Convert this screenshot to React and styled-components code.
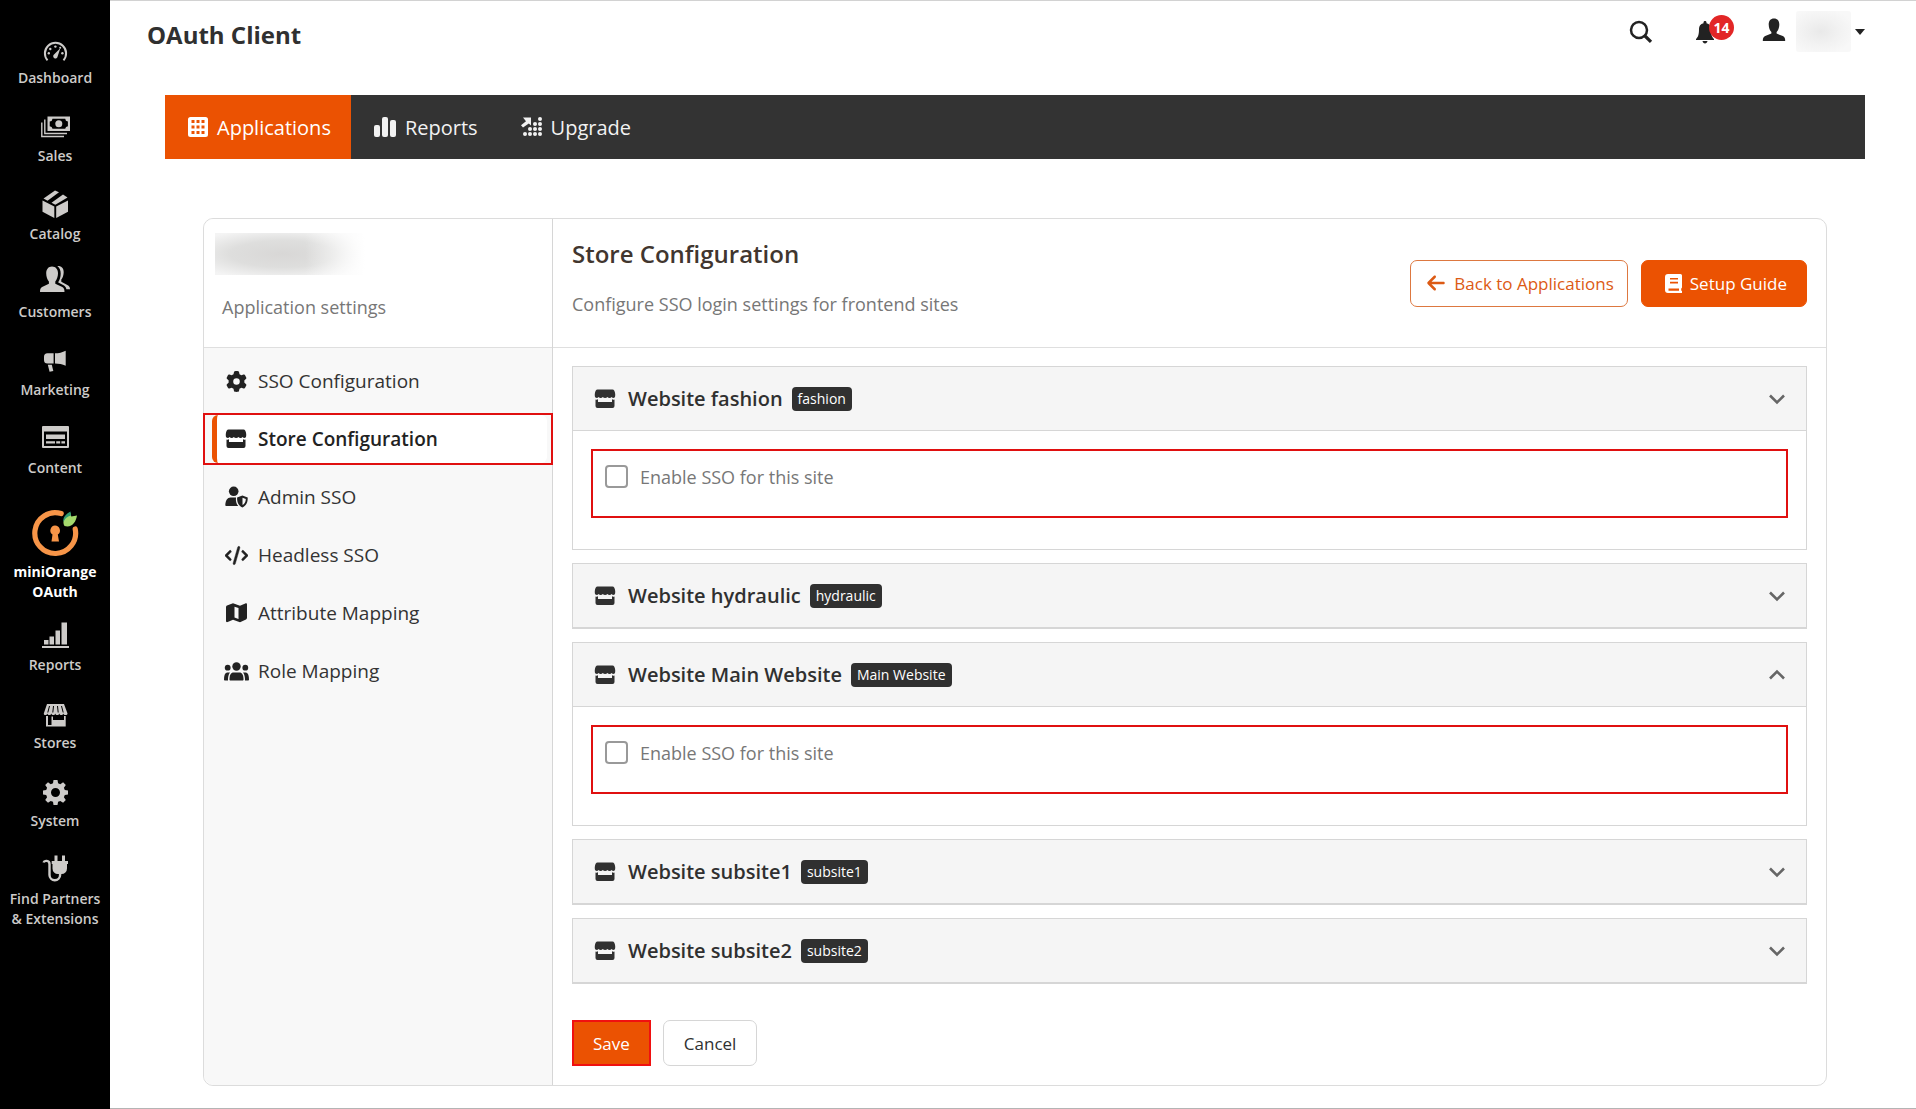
import { useState } from 'react';
import styled, { createGlobalStyle } from 'styled-components';
import { FaArrowLeft, FaCode, FaGear } from 'react-icons/fa6';

const MENU = [
  { label: 'Dashboard', icon: 'dashboard' },
  { label: 'Sales', icon: 'sales' },
  { label: 'Catalog', icon: 'catalog' },
  { label: 'Customers', icon: 'customers' },
  { label: 'Marketing', icon: 'marketing' },
  { label: 'Content', icon: 'content' },
  { label: 'miniOrange OAuth', icon: 'logo', active: true },
  { label: 'Reports', icon: 'reports' },
  { label: 'Stores', icon: 'stores' },
  { label: 'System', icon: 'system' },
  { label: 'Find Partners & Extensions', icon: 'plug' },
];

const SETTINGS = [
  { label: 'SSO Configuration', icon: <FaGear size={21} /> },
  { label: 'Store Configuration', icon: <StoreIcon />, active: true },
  { label: 'Admin SSO', icon: <AdminIcon /> },
  { label: 'Headless SSO', icon: <FaCode size={23} stroke="currentColor" strokeWidth="12" /> },
  { label: 'Attribute Mapping', icon: <MapIcon /> },
  { label: 'Role Mapping', icon: <RolesIcon /> },
];

const SITES = [
  { name: 'fashion', open: true, arrowUp: false },
  { name: 'hydraulic', open: false, arrowUp: false },
  { name: 'Main Website', open: true, arrowUp: true },
  { name: 'subsite1', open: false, arrowUp: false },
  { name: 'subsite2', open: false, arrowUp: false },
];

const MENU_ICONS = {
  dashboard: (
    <>
      <path d="M8.5 28.3A10.6 10.6 0 1 1 24.5 28.3" fill="none" stroke="currentColor" strokeWidth="2" />
      <path d="M21.3 16.2L18.6 24.4A2.2 2.2 0 1 1 15 22.5Z" />
      <circle cx="9.8" cy="21.3" r="1.2" />
      <circle cx="11.3" cy="17" r="1.2" />
      <circle cx="16.4" cy="14.6" r="1.2" />
      <circle cx="23.4" cy="21.3" r="1.2" />
      <circle cx="21.2" cy="15.8" r="1" />
    </>
  ),
  sales: (
    <>
      <path
        fillRule="evenodd"
        d="M8.5 6.5h22.5v14.5H8.5zM13.5 8.8a3 3 0 0 1-2.8 2.8v4.6a3 3 0 0 1 2.8 2.6h12.7a3 3 0 0 1 2.7-2.6v-4.6a3 3 0 0 1-2.7-2.8z"
      />
      <circle cx="19.8" cy="13.8" r="3.5" />
      <path d="M5.8 9.5v14H28M2.8 12.5v14H25" fill="none" stroke="currentColor" strokeWidth="1.4" />
    </>
  ),
  catalog: (
    <>
      <path d="M3.5 12.6L15.3 18.6V30L3.5 23.8z" />
      <path d="M29 12.6L17.2 18.6V30L29 23.8z" />
      <path d="M4.5 10.6L16 2.5l4 1.8L8.5 12.7z" />
      <path d="M12.5 14.7L24 6.6l4.5 2.9-12.2 7.3z" />
    </>
  ),
  customers: (
    <>
      <path d="M13 .5c3.700 0 6 2.800 6 6.800 0 3.500-1.300 6.700-2.700 8.200v2.200l7 3.200c1.500.7 2.200 2 2.200 5.100H1c0-3.100.6-4.400 2.100-5.100l6.800-3.200v-2.200C8.400 14 7.200 10.800 7.200 7.300 7.200 3.300 9.300.5 13 .5z" />
      <path d="M18.300 0c4-.5 6.400 2 6.400 6 0 3.200-1.100 6.100-2.400 7.500v2.200l6 3.300c1.900 1 2.700 2 2.700 4.200h-3.600c-.4-2.100-1.500-3.300-3.300-4.200l-4.800-2.500v-.5c1.500-2.200 2.400-5.200 2.400-8.500 0-3-1.100-5.800-3.400-7.500z" />
    </>
  ),
  marketing: (
    <>
      <path d="M14.600 9.300v10.200H8.500A3.500 3.500 0 0 1 5 16v-3.200a3.500 3.500 0 0 1 3.500-3.500z" />
      <path d="M16 9.300c3.800-.1 7.400-.9 10.700-2.600v15c-3.300-1.500-6.900-2.200-10.700-2.200z" />
      <path d="M8.800 20.800h4l1.500 6.200-3.700.7z" />
    </>
  ),
  content: (
    <path
      fillRule="evenodd"
      d="M4 4h25a1 1 0 0 1 1 1v20a1 1 0 0 1-1 1H4a1 1 0 0 1-1-1V5a1 1 0 0 1 1-1zM5 9.500v14.500h23V9.500zM7 12.500h19v4.500H7zM7 19.200h9v2.200H7zM17.200 19.200h4v2.200h-4zM22.400 19.200h3.600v2.200h-3.600z"
    />
  ),
  reports: (
    <path d="M3 27h27v2H3zM5 21h4.500v4.500H5zM10.500 17.500H15v8h-4.500zM16.500 11.500H21v14h-4.500zM22.500 3.500H28v22h-5.500z" />
  ),
  stores: (
    <>
      <path d="M8 7h17l3.500 9.500c0 2-3.800 2-4.200 0-.5 2-3.600 2-4 0-.5 2-3.700 2-4 0-.4 2-3.500 2-4 0-.4 2-3.500 2-4 0-.4 2-3.600 2-3.500 0z" />
      <path d="M10.500 9l-1.700 6.500M14.500 9l-.7 6.500M18.500 9l.7 6.500M22.500 9l1.700 6.500" stroke="#000" strokeWidth="1" />
      <path fillRule="evenodd" d="M7 19h2v9h3.500v-8.500h1.500v3.500h11v-4h1.700v10.500H7z" />
    </>
  ),
  system: (
    <path
      fillRule="evenodd"
      d="M14.500 5h4l.6 3.300 2.200.9 2.800-1.900 2.700 2.700-1.900 2.800.9 2.200 3.200.5v4l-3.200.6-.9 2.200 1.900 2.700-2.700 2.800-2.800-1.900-2.200.9-.6 3.200h-4l-.5-3.200-2.300-.9-2.700 1.900-2.800-2.800 1.900-2.700-.9-2.200-3.200-.6v-4l3.200-.5.9-2.200L6.200 10l2.800-2.700 2.700 1.900 2.300-.9zM16.500 13a4.500 4.500 0 1 0 0 9 4.500 4.500 0 0 0 0-9z"
    />
  ),
  plug: (
    <>
      <path d="M15.500 2.500h3v5.500h4.500V2.500h3V8H29v3h-1v4.500a5.500 5.500 0 0 1-5.500 5.500h-3.500A5.500 5.500 0 0 1 13.500 15.500V11h-.8V8h2.800z" />
      <path
        d="M4.500 9.500c.7-2.300 6-2.500 6 1.500v11a5.300 5.300 0 0 0 10.600 0v-2"
        fill="none"
        stroke="currentColor"
        strokeWidth="2.400"
      />
    </>
  ),
};

function MenuIcon({ name }) {
  if (name === 'logo') {
    return (
      <svg width="60" height="58" viewBox="0 0 60 58" aria-hidden="true">
        <path
          d="M36.200 13.600A20.400 20.400 0 1 0 50.200 29"
          fill="none"
          stroke="#f79548"
          strokeWidth="5.200"
          strokeLinecap="round"
        />
        <path d="M30 25.500a5 5 0 0 1 2.800 9.100l1.200 6.900h-7.500l1-6.900A5 5 0 0 1 30 25.500z" fill="#f79548" />
        <path d="M39.500 26c-3-5 1-9.500 6-13l.8 3.500 5.700-1c-1 6.500-5 12.500-12.500 10.500z" fill="#a4d96c" />
        <path d="M38.500 22c-1-4.500 2.500-8 7-10.500l.5 4c-3 .5-6 2.500-7.500 6.500z" fill="#2c9a72" />
      </svg>
    );
  }
  return (
    <svg width="32" height="32" viewBox="0 0 32 32" fill="currentColor" aria-hidden="true">
      {MENU_ICONS[name]}
    </svg>
  );
}

function StoreIcon() {
  return (
    <svg width="22" height="20" viewBox="0 0 22 20" fill="currentColor" aria-hidden="true">
      <path d="M3.500.5h15c1.500 0 2.500 1.800 2.700 4.500.1 1.800 0 3.300-1 3.800-1 .4-2-.1-2.600-.9-.8 1.300-3.200 1.300-4.200 0-1 1.300-3.600 1.300-4.600 0-1 1.300-3.200 1.300-4.200 0-.6.800-1.700 1.300-2.700.9C.8 8.300.7 6.800.8 5 1 2.300 2 .5 3.500.5z" />
      <path d="M1.500 10.500c1 .3 1.700.2 2.500-.2v2.700h14v-2.700c.8.4 1.500.5 2.500.2V17a2 2 0 0 1-2 2h-15a2 2 0 0 1-2-2z" />
    </svg>
  );
}

function AdminIcon() {
  return (
    <svg width="23" height="22" viewBox="0 0 23 22" fill="currentColor" aria-hidden="true">
      <circle cx="8.700" cy="5.300" r="4.800" />
      <path d="M5.500 11.500h5.500c-.4 3.500.3 6.300 2.200 8.500H1.500C.7 20 .2 19.500.3 18.700.7 14.500 2.300 11.500 5.500 11.500z" />
      <path
        fillRule="evenodd"
        d="M17.400 9.500l5.300 2c.2 4.500-1.300 8.300-5.300 10-4-1.700-5.500-5.500-5.300-10zM17.500 11.800v7.300c2.300-1.200 3.200-3.200 3.300-6z"
      />
    </svg>
  );
}

function MapIcon() {
  return (
    <svg width="21" height="20" viewBox="0 0 21 20" fill="currentColor" aria-hidden="true">
      <path
        fillRule="evenodd"
        d="M0 4.200c0-.8.400-1.300 1-1.600L7 .3l7 2.400L19.300.5C20.300.1 21 .6 21 1.500v13.300c0 .8-.4 1.300-1 1.600L14 19.200l-7-2.500-5.300 2.400c-1 .4-1.700-.1-1.700-1zM8.500 3.700v10.800l4 1.500V5.100z"
      />
    </svg>
  );
}

function RolesIcon() {
  return (
    <svg width="25" height="19" viewBox="0 0 25 19" fill="currentColor" aria-hidden="true">
      <circle cx="12.500" cy="4.500" r="4.200" />
      <circle cx="3.700" cy="5.700" r="2.900" />
      <circle cx="21.300" cy="5.700" r="2.900" />
      <path d="M9.500 10.500h6c2.500 0 4 2.500 4 7 0 .6-.4 1-1 1h-12c-.6 0-1-.4-1-1 0-4.500 1.500-7 4-7z" />
      <path d="M3 10.500h3c-1.500 2-2.100 4.500-2 8H.8c-.5 0-.8-.3-.8-.8 0-4 .8-6.700 3-7.200zM22 10.500h-3c1.500 2 2.100 4.500 2 8h3.200c.5 0 .8-.3.8-.8 0-4-.8-6.700-3-7.200z" />
    </svg>
  );
}

function AppShell() {
  const [sites, setSites] = useState(SITES);

  const toggleSite = name => {
    setSites(
      sites.map(site => (site.name === name ? { ...site, open: !site.open, arrowUp: !site.open } : site)),
    );
  };

  return (
    <Page>
      <Sidebar>
        <MenuList>
          {MENU.map(item => (
            <li key={item.label}>
              <MenuLink href="#" $active={item.active}>
                <MenuIcon name={item.icon} />
                <span>{item.label}</span>
              </MenuLink>
            </li>
          ))}
        </MenuList>
      </Sidebar>

      <Main>
        <Header>
          <PageTitle>OAuth Client</PageTitle>
          <HeaderTools>
            <IconButton aria-label="Search">
              <svg width="24" height="24" viewBox="0 0 24 24" fill="none" stroke="currentColor">
                <circle cx="10" cy="10" r="8" strokeWidth="2.500" />
                <path d="M15.500 15.500l6.500 6.300" strokeWidth="3.200" />
              </svg>
            </IconButton>
            <IconButton aria-label="Notifications">
              <svg width="20" height="24" viewBox="0 0 20 24" fill="currentColor">
                <path d="M10 1c1 0 1.500.6 1.500 1.500v.8C14.600 4 16 6 16 9c0 5.500.8 8 3 10v1H1v-1c2.200-2 3-4.500 3-10 0-3 1.400-5 4.500-5.700v-.8C8.500 1.600 9 1 10 1zM7.500 21h5c-.3 1.600-1.200 2.400-2.500 2.400S7.800 22.600 7.500 21z" />
              </svg>
              <Count>14</Count>
            </IconButton>
            <UserButton aria-label="Account">
              <svg width="24" height="27" viewBox="0 0 24 27" fill="currentColor">
                <path d="M12 .5c3.500 0 5.300 2.300 5.300 6 0 3.200-1.200 6-2.700 7.500v1.600l6.200 2.400c1.700.7 2.400 2 2.400 5H.8c0-3 .7-4.300 2.400-5l6.200-2.400V14C7.900 12.500 6.700 9.700 6.700 6.500c0-3.700 1.800-6 5.300-6z" />
              </svg>
              <HiddenName />
              <svg width="10" height="6" viewBox="0 0 10 6" fill="currentColor">
                <path d="M0 0h10L5 6z" />
              </svg>
            </UserButton>
          </HeaderTools>
        </Header>

        <Tabs>
          <Tab href="#" $active>
            <svg width="20" height="20" viewBox="0 0 20 20" fill="currentColor">
              <path
                fillRule="evenodd"
                d="M2.500 0h15A2.500 2.500 0 0 1 20 2.500v15a2.500 2.500 0 0 1-2.500 2.500h-15A2.500 2.500 0 0 1 0 17.500v-15A2.500 2.500 0 0 1 2.500 0zM3.500 3v3h3V3zM8.500 3v3h3V3zM13.500 3v3h3V3zM3.500 8.500v3h3v-3zM8.500 8.500v3h3v-3zM13.500 8.500v3h3v-3zM3.500 14v3h3v-3zM8.500 14v3h3v-3zM13.500 14v3h3v-3z"
              />
            </svg>
            Applications
          </Tab>
          <Tab href="#">
            <svg width="22" height="20" viewBox="0 0 22 20" fill="currentColor">
              <rect y="8" width="6" height="12" rx="2" />
              <rect x="8" width="6" height="20" rx="2" />
              <rect x="16" y="3" width="6" height="17" rx="2" />
            </svg>
            Reports
          </Tab>
          <Tab href="#">
            <svg width="21" height="20" viewBox="0 0 21 20" fill="currentColor">
              <path d="M2 .5h8v8L7.800 6.500 2 10.500 0 8.300l5-4z" />
              {[
                [19, 2], [19, 7], [14, 7], [19, 12], [14, 12], [9, 12],
                [19, 17], [14, 17], [9, 17], [4, 17],
              ].map(([x, y]) => (
                <circle key={`${x}-${y}`} cx={x} cy={y} r="2" />
              ))}
            </svg>
            Upgrade
          </Tab>
        </Tabs>

        <Panel>
          <Settings>
            <SettingsHead>
              <HiddenApp />
              <Muted>Application settings</Muted>
            </SettingsHead>
            <SettingsList>
              {SETTINGS.map(item => (
                <SettingsItem key={item.label} $active={item.active}>
                  <SettingsLink href="#" $active={item.active}>
                    <IconSlot>{item.icon}</IconSlot>
                    {item.label}
                  </SettingsLink>
                </SettingsItem>
              ))}
            </SettingsList>
          </Settings>

          <Content>
            <ContentHead>
              <HeadText>
                <Title>Store Configuration</Title>
                <Muted>Configure SSO login settings for frontend sites</Muted>
              </HeadText>
              <HeadActions>
                <ActionLink href="#">
                  <FaArrowLeft size={20} />
                  Back to Applications
                </ActionLink>
                <ActionLink href="#" $primary>
                  <svg width="17" height="19" viewBox="0 0 17 19" fill="currentColor">
                    <path
                      fillRule="evenodd"
                      d="M3 0h12.500A1.500 1.500 0 0 1 17 1.500v11.800c0 .7-.3 1-.8 1.300v2.200h.8V19H3a3 3 0 0 1-3-3V3a3 3 0 0 1 3-3zM5 4v1.600h8V4zM5 7.800v1.600h8V7.800zM3.500 14.600v2.200h10.500v-2.200z"
                    />
                  </svg>
                  Setup Guide
                </ActionLink>
              </HeadActions>
            </ContentHead>

            <Form onSubmit={e => e.preventDefault()}>
              {sites.map(site => (
                <Site key={site.name}>
                  <SiteToggle
                    type="button"
                    aria-expanded={site.open}
                    onClick={() => toggleSite(site.name)}
                  >
                    <StoreIcon />
                    <SiteName>Website {site.name}</SiteName>
                    <Badge>{site.name}</Badge>
                    <Chevron width="18" height="12" viewBox="0 0 18 12" fill="none">
                      <path d={site.arrowUp ? 'M2 9.500l7-7 7 7' : 'M2 2.500l7 7 7-7'} stroke="#666" strokeWidth="2.600" />
                    </Chevron>
                  </SiteToggle>
                  {site.open && (
                    <SiteBody>
                      <CheckLabel>
                        <Checkbox type="checkbox" />
                        Enable SSO for this site
                      </CheckLabel>
                    </SiteBody>
                  )}
                </Site>
              ))}
              <FormActions>
                <SaveButton type="submit">Save</SaveButton>
                <CancelButton type="button">Cancel</CancelButton>
              </FormActions>
            </Form>
          </Content>
        </Panel>
      </Main>
    </Page>
  );
}

export default function App() {
  return (
    <>
      <GlobalStyle />
      <AppShell />
    </>
  );
}

const GlobalStyle = createGlobalStyle`
  *, *::before, *::after {
    box-sizing: border-box;
  }
  body {
    margin: 0;
    background: #fff;
    color: #222;
    font-family: 'Open Sans', 'Noto Sans', sans-serif;
  }
  button, input {
    font-family: inherit;
    margin: 0;
  }
  a {
    color: inherit;
    text-decoration: none;
  }
  svg {
    display: block;
    flex: none;
  }
`;

const Page = styled.div`
  display: flex;
  min-height: 100vh;
`;

const Sidebar = styled.nav`
  flex: 0 0 110px;
  padding-top: 20px;
  background: #000;
`;

const MenuList = styled.ul`
  list-style: none;
  margin: 0;
  padding: 0;
`;

const MenuLink = styled.a`
  display: flex;
  flex-direction: column;
  align-items: center;
  gap: 4px;
  min-height: ${props => (props.$active ? '119px' : '78px')};
  padding: 12px 6px 0;
  color: ${props => (props.$active ? '#fff' : '#cdcbc9')};
  font-size: 14px;
  font-weight: ${props => (props.$active ? 700 : 600)};
  line-height: 20px;
  text-align: center;
`;

const Main = styled.main`
  flex: 1;
  min-width: 0;
  padding: 0 51px 22px 55px;
  border-top: 1px solid #d2d2d2;
  border-bottom: 1px solid #b4b4b4;
`;

const Header = styled.header`
  display: flex;
  justify-content: space-between;
  align-items: flex-start;
  min-height: 94px;
  margin-left: -18px;
  padding-top: 10px;
`;

const PageTitle = styled.h1`
  margin: 0;
  color: #303030;
  font-size: 24px;
  font-weight: 700;
  line-height: 48px;
`;

const HeaderTools = styled.div`
  display: flex;
  align-items: center;
  gap: 42px;
  height: 41px;
`;

const IconButton = styled.button`
  position: relative;
  padding: 0;
  border: 0;
  background: none;
  color: #222;
`;

const Count = styled.span`
  position: absolute;
  top: -5px;
  left: 14px;
  width: 25px;
  height: 25px;
  border-radius: 50%;
  background: #e22626;
  color: #fff;
  font-size: 14px;
  font-weight: 700;
  line-height: 25px;
  text-align: center;
`;

const UserButton = styled.button`
  display: flex;
  align-items: center;
  gap: 14px;
  padding: 0;
  border: 0;
  background: none;
  color: #222;
  margin-left: 5px;
`;

const HiddenName = styled.span`
  width: 55px;
  height: 41px;
  margin: 0 -10px 0 -4px;
  border-radius: 3px;
  background: radial-gradient(ellipse at 45% 50%, #e9e9e9, #f2f2f2 45%, #f8f8f8 80%);
`;

const Tabs = styled.nav`
  display: flex;
  background: #333;
`;

const Tab = styled.a`
  display: flex;
  align-items: center;
  gap: 9px;
  height: 64px;
  padding: 0 20px 0 23px;
  background: ${props => (props.$active ? '#eb5202' : 'transparent')};
  color: ${props => (props.$active ? '#fff' : '#f2f2f2')};
  font-size: 20px;
`;

const Panel = styled.section`
  display: flex;
  margin: 59px 38px 0;
  border: 1px solid #dcdcdc;
  border-radius: 10px;
`;

const Settings = styled.aside`
  flex: 0 0 349px;
  border-right: 1px solid #d6d6d6;
  border-radius: 10px 0 0 10px;
  background: #f8f8f8;
`;

const SettingsHead = styled.div`
  height: 129px;
  padding: 14px 18px 0 11px;
  border-bottom: 1px solid #dfdfdf;
  border-radius: 10px 0 0 0;
  background: #fff;

  p {
    margin: 18px 0 0 7px;
  }
`;

const HiddenApp = styled.div`
  width: 150px;
  height: 42px;
  background:
    linear-gradient(90deg, rgba(255, 255, 255, 0) 60%, #fff),
    radial-gradient(ellipse at 45% 50%, #d8d7d6, #dededd 45%, #f4f4f4 85%);
`;

const Muted = styled.p`
  margin: 0;
  color: #777;
  font-size: 18px;
  line-height: 28px;
`;

const SettingsList = styled.ul`
  display: flex;
  flex-direction: column;
  gap: 6px;
  list-style: none;
  margin: 0 -1px;
  padding: 7px 0;
`;

const SettingsItem = styled.li`
  padding: 0 4px 0 7px;
  border: 2px solid ${props => (props.$active ? '#e01010' : 'transparent')};
`;

const SettingsLink = styled.a`
  display: flex;
  align-items: center;
  gap: 10px;
  height: 48px;
  padding-left: 7px;
  border-left: 5px solid ${props => (props.$active ? '#eb5202' : 'transparent')};
  border-radius: 6px;
  background: ${props => (props.$active ? '#fff' : 'transparent')};
  color: ${props => (props.$active ? '#222' : '#333')};
  font-size: 19px;
  font-weight: ${props => (props.$active ? 600 : 400)};
`;

const IconSlot = styled.span`
  display: flex;
  justify-content: center;
  width: 24px;
  color: #222;
`;

const Content = styled.div`
  flex: 1;
  min-width: 0;
`;

const ContentHead = styled.div`
  display: flex;
  justify-content: space-between;
  align-items: center;
  height: 129px;
  padding: 0 19px;
  border-bottom: 1px solid #dfdfdf;
`;

const HeadText = styled.div`
  padding-bottom: 10px;
`;

const Title = styled.h2`
  margin: 0 0 20px;
  color: #41362f;
  font-size: 24px;
  font-weight: 600;
  line-height: 32px;
`;

const HeadActions = styled.div`
  display: flex;
  gap: 13px;
`;

const ActionLink = styled.a`
  display: flex;
  align-items: center;
  gap: 8px;
  height: 47px;
  padding: ${props => (props.$primary ? '0 19px 0 23px' : '0 13px 0 15px')};
  border: 1px solid ${props => (props.$primary ? '#eb5202' : '#dd7840')};
  border-radius: 7px;
  background: ${props => (props.$primary ? '#eb5202' : '#fff')};
  color: ${props => (props.$primary ? '#fff' : '#dc5a14')};
  font-size: 17px;
`;

const Form = styled.form`
  display: flex;
  flex-direction: column;
  gap: 13px;
  padding: 18px 19px 19px;
`;

const Site = styled.section`
  border: 1px solid #d6d6d6;
`;

const SiteToggle = styled.button`
  display: flex;
  align-items: center;
  width: 100%;
  height: 64px;
  padding: 0 20px 0 21px;
  border: 0;
  border-bottom: 1px solid #d6d6d6;
  background: #f5f5f5;
  color: #303030;
  text-align: left;
`;

const SiteName = styled.span`
  margin-left: 12px;
  font-size: 20px;
  font-weight: 600;
`;

const Badge = styled.span`
  margin-left: 9px;
  padding: 0 6px;
  border-radius: 4px;
  background: #303030;
  color: #fff;
  font-size: 14px;
  line-height: 24px;
`;

const Chevron = styled.svg`
  margin-left: auto;
`;

const SiteBody = styled.div`
  padding: 18px 18px 31px;
`;

const CheckLabel = styled.label`
  display: flex;
  align-items: flex-start;
  gap: 12px;
  min-height: 69px;
  padding: 14px 12px;
  border: 2px solid #e01010;
  color: #777;
  font-size: 18px;
  line-height: 24px;
`;

const Checkbox = styled.input`
  appearance: none;
  flex: none;
  width: 23px;
  height: 23px;
  border: 2px solid #999;
  border-radius: 4px;
  background: #fff;

  &:checked {
    background: #eb5202;
  }
`;

const FormActions = styled.div`
  display: flex;
  gap: 12px;
  margin-top: 23px;
`;

const SaveButton = styled.button`
  height: 46px;
  padding: 0 19px;
  border: 2px solid #f01010;
  background: #eb5202;
  color: #fff;
  font-size: 17px;
`;

const CancelButton = styled.button`
  height: 46px;
  padding: 0 20px;
  border: 1px solid #d6d6d6;
  border-radius: 7px;
  background: #fff;
  color: #303030;
  font-size: 17px;
`;
